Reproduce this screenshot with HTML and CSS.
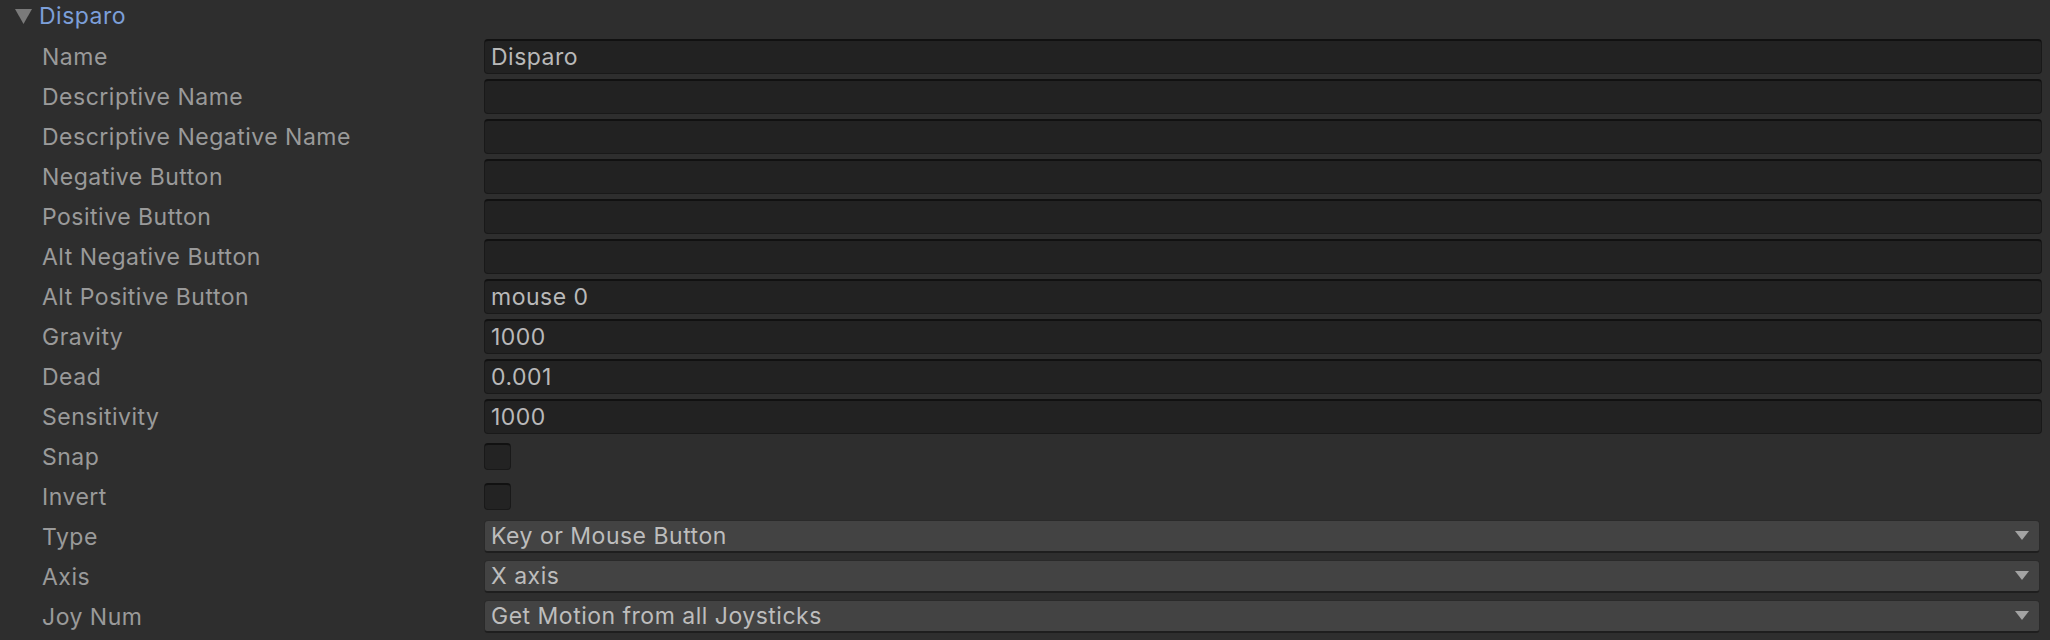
FILE: index.html
```html
<!DOCTYPE html>
<html>
<head>
<meta charset="utf-8">
<link rel="stylesheet" href="styles.css">
</head>
<body>
<div class="inspector">
  <div class="foldout">
    <svg class="fold-arrow" width="17" height="15" viewBox="0 0 17 15"><polygon points="0,0 17,0 8.5,15" fill="#7a7a7a"/></svg>
    <span class="fold-title">Disparo</span>
  </div>
  <div class="props">
    <div class="row"><span class="label">Name</span><div class="field">Disparo</div></div>
    <div class="row"><span class="label">Descriptive Name</span><div class="field"></div></div>
    <div class="row"><span class="label">Descriptive Negative Name</span><div class="field"></div></div>
    <div class="row"><span class="label">Negative Button</span><div class="field"></div></div>
    <div class="row"><span class="label">Positive Button</span><div class="field"></div></div>
    <div class="row"><span class="label">Alt Negative Button</span><div class="field"></div></div>
    <div class="row"><span class="label">Alt Positive Button</span><div class="field">mouse 0</div></div>
    <div class="row"><span class="label">Gravity</span><div class="field">1000</div></div>
    <div class="row"><span class="label">Dead</span><div class="field">0.001</div></div>
    <div class="row"><span class="label">Sensitivity</span><div class="field">1000</div></div>
    <div class="row"><span class="label">Snap</span><div class="check-cell"><div class="checkbox"></div></div></div>
    <div class="row"><span class="label">Invert</span><div class="check-cell"><div class="checkbox"></div></div></div>
    <div class="row"><span class="label">Type</span><div class="dropdown"><span>Key or Mouse Button</span><svg class="dd-arrow" width="14" height="9" viewBox="0 0 14 9"><polygon points="0,0 14,0 7,9" fill="#a3a3a3"/></svg></div></div>
    <div class="row"><span class="label">Axis</span><div class="dropdown"><span>X axis</span><svg class="dd-arrow" width="14" height="9" viewBox="0 0 14 9"><polygon points="0,0 14,0 7,9" fill="#a3a3a3"/></svg></div></div>
    <div class="row"><span class="label">Joy Num</span><div class="dropdown"><span>Get Motion from all Joysticks</span><svg class="dd-arrow" width="14" height="9" viewBox="0 0 14 9"><polygon points="0,0 14,0 7,9" fill="#a3a3a3"/></svg></div></div>
  </div>
</div>
</body>
</html>
```
FILE: styles.css
```css
html, body {
  margin: 0;
  padding: 0;
  background: #2e2e2e;
}
body {
  width: 2050px;
  height: 640px;
  overflow: hidden;
  font-family: Inter, "Noto Sans", sans-serif;
  font-size: 23px;
  letter-spacing: 0.5px;
}
.inspector {
  display: flex;
  flex-direction: column;
}
.foldout {
  height: 36px;
  display: flex;
  align-items: flex-start;
  padding-left: 15px;
  box-sizing: border-box;
}
.fold-arrow {
  margin-top: 9px;
  flex: none;
}
.fold-title {
  color: #7c9fd9;
  margin-left: 7px;
  line-height: 32px;
}
.props {
  display: flex;
  flex-direction: column;
  padding-left: 42px;
  padding-right: 8px;
}
.row {
  height: 40px;
  display: grid;
  grid-template-columns: 442px 1fr;
  align-items: center;
}
.label {
  color: #9a9a9a;
  white-space: nowrap;
  padding-top: 2px;
}
.field {
  height: 35px;
  box-sizing: border-box;
  background: #222222;
  border: 1px solid #191919;
  border-top: 2px solid #111111;
  border-radius: 4px;
  color: #b9b9b9;
  padding-left: 6px;
  padding-top: 1px;
  line-height: 31px;
}
.check-cell {
  display: flex;
}
.checkbox {
  width: 27px;
  height: 27px;
  box-sizing: border-box;
  background: #232323;
  border: 1px solid #191919;
  border-top: 2px solid #111111;
  border-radius: 4px;
}
.dropdown {
  height: 33px;
  margin-right: 2px;
  box-sizing: border-box;
  background: #434343;
  border: 1px solid #2a2a2a;
  border-bottom: 2px solid #1e1e1e;
  border-radius: 4px;
  color: #bdbdbd;
  padding-left: 6px;
  padding-right: 10px;
  display: flex;
  align-items: center;
  justify-content: space-between;
}
.dd-arrow {
  flex: none;
}
```
